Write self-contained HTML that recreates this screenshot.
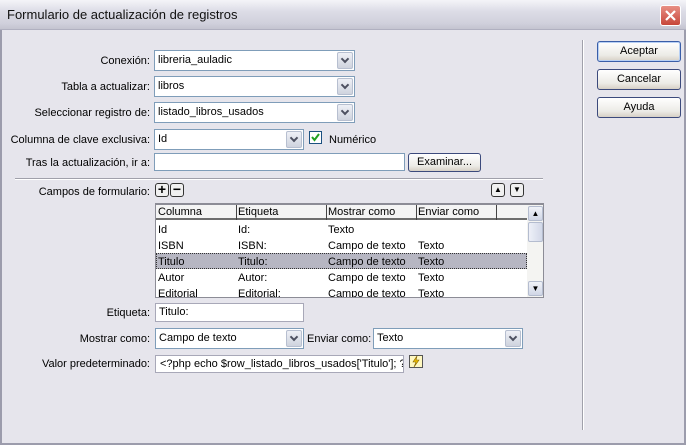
<!DOCTYPE html>
<html><head><meta charset="utf-8"><style>
*{box-sizing:border-box;margin:0;padding:0}
body{width:686px;height:445px;overflow:hidden;font-family:"Liberation Sans",sans-serif;font-size:11px;color:#000;background:#e6e5ec;position:relative}
.a{position:absolute}
.win{left:0;top:0;width:686px;height:445px;border:2px solid #9c9cac;border-top:none}
.title{left:0;top:0;width:686px;height:30px;background:linear-gradient(#f4f4f8,#dcdce6 40%,#d0d0dc 80%,#c4c4d0);border-bottom:1px solid #b0b0c0}
.title span{position:absolute;left:7px;top:7px;font-size:13px;color:#111}
.close{left:660px;top:5px;width:21px;height:21px;border:1px solid #fff;border-radius:3px;background:linear-gradient(#e88f84,#c7463a);}
.lbl{text-align:right;white-space:nowrap}
.in{background:#fff;border:1px solid #7f9db9;padding:0 3px;line-height:16px;white-space:nowrap;overflow:hidden}
.sel{background:#fff;border:1px solid #7f9db9;padding:0 3px;line-height:19px;white-space:nowrap}
.dd{position:absolute;right:1px;top:1px;bottom:1px;width:16px;background:linear-gradient(#eef0f6,#cfd3de);border:1px solid #b7bfd0;border-radius:2px}
.dd:after{content:"";position:absolute;left:4px;top:3px;width:4px;height:4px;border-right:2px solid #4d5060;border-bottom:2px solid #4d5060;transform:rotate(45deg)}
.btn{border:1px solid #3c4a7c;border-radius:3px;background:linear-gradient(#fff,#ecebe6 70%,#d6d0c5);text-align:center;line-height:18px}
.sm{width:14px;height:14px;border:1px solid #333;border-radius:3px;background:#f0f0f0;font-weight:bold;text-align:center;line-height:11px;font-size:14px}
</style></head><body>
<div class="a win"></div>
<div class="a title"><span>Formulario de actualización de registros</span></div>
<div class="a close"><svg width="19" height="19"><path d="M5 5L14 14M14 5L5 14" stroke="#fff" stroke-width="2.2"/></svg></div>
<div class="a" style="left:582px;top:40px;width:2px;height:390px;background:#a0a0aa;border-right:1px solid #fff"></div>
<div class="a btn" style="left:597px;top:41px;width:84px;height:21px;border-color:#3a5ea8;box-shadow:inset 0 0 0 1px #b8d0f4">Aceptar</div>
<div class="a btn" style="left:597px;top:69px;width:84px;height:21px">Cancelar</div>
<div class="a btn" style="left:597px;top:97px;width:84px;height:21px">Ayuda</div>

<div class="a lbl" style="right:536px;top:55px">Conexión:</div>
<div class="a sel" style="left:154px;top:50px;width:201px;height:21px">libreria_auladic<div class="dd"></div></div>
<div class="a lbl" style="right:536px;top:81px">Tabla a actualizar:</div>
<div class="a sel" style="left:154px;top:76px;width:201px;height:21px">libros<div class="dd"></div></div>
<div class="a lbl" style="right:536px;top:107px">Seleccionar registro de:</div>
<div class="a sel" style="left:154px;top:102px;width:201px;height:21px">listado_libros_usados<div class="dd"></div></div>
<div class="a lbl" style="right:536px;top:134px">Columna de clave exclusiva:</div>
<div class="a sel" style="left:154px;top:129px;width:150px;height:21px">Id<div class="dd"></div></div>
<div class="a" style="left:309px;top:131px;width:13px;height:13px;border:1px solid #1c5180;background:#fff"><svg width="11" height="11"><path d="M2 5L4.5 8L9 2" stroke="#21a121" stroke-width="2" fill="none"/></svg></div>
<div class="a" style="left:329px;top:134px">Numérico</div>
<div class="a lbl" style="right:536px;top:157px">Tras la actualización, ir a:</div>
<div class="a in" style="left:154px;top:153px;width:251px;height:18px"></div>
<div class="a btn" style="left:408px;top:153px;width:73px;height:19px;line-height:17px">Examinar...</div>
<div class="a" style="left:15px;top:178px;width:528px;background:#a0a0aa;border-bottom:1px solid #fff;height:2px"></div>

<div class="a lbl" style="right:536px;top:186px">Campos de formulario:</div>
<div class="a sm" style="left:155px;top:183px">+</div>
<div class="a sm" style="left:170px;top:183px">−</div>
<div class="a sm" style="left:491px;top:183px;font-size:8px;line-height:12px">▲</div>
<div class="a sm" style="left:510px;top:183px;font-size:8px;line-height:12px">▼</div>

<div class="a" style="left:155px;top:203px;width:389px;height:95px;background:#fff;border:1px solid #8c8c96;border-top:2px solid #8c8c96;overflow:hidden">
 <div class="a" style="left:0;top:0;width:371px;height:15px;background:#f4f4f4;border-bottom:2px solid #6e6e6e"></div>
 <div class="a" style="left:2px;top:1px">Columna</div>
 <div class="a" style="left:80px;top:0;width:1px;height:15px;background:#444"></div>
 <div class="a" style="left:82px;top:1px">Etiqueta</div>
 <div class="a" style="left:170px;top:0;width:1px;height:15px;background:#444"></div>
 <div class="a" style="left:172px;top:1px">Mostrar como</div>
 <div class="a" style="left:260px;top:0;width:1px;height:15px;background:#444"></div>
 <div class="a" style="left:262px;top:1px">Enviar como</div>
 <div class="a" style="left:340px;top:0;width:1px;height:15px;background:#444"></div>
 <div class="a" style="left:0;top:48px;width:371px;height:16px;background:#b6b6c2;border:1px dotted #333"></div>
 <div class="a" style="left:2px;top:19px">Id</div><div class="a" style="left:82px;top:19px">Id:</div><div class="a" style="left:172px;top:19px">Texto</div>
 <div class="a" style="left:2px;top:35px">ISBN</div><div class="a" style="left:82px;top:35px">ISBN:</div><div class="a" style="left:172px;top:35px">Campo de texto</div><div class="a" style="left:262px;top:35px">Texto</div>
 <div class="a" style="left:2px;top:51px">Titulo</div><div class="a" style="left:82px;top:51px">Titulo:</div><div class="a" style="left:172px;top:51px">Campo de texto</div><div class="a" style="left:262px;top:51px">Texto</div>
 <div class="a" style="left:2px;top:67px">Autor</div><div class="a" style="left:82px;top:67px">Autor:</div><div class="a" style="left:172px;top:67px">Campo de texto</div><div class="a" style="left:262px;top:67px">Texto</div>
 <div class="a" style="left:2px;top:83px">Editorial</div><div class="a" style="left:82px;top:83px">Editorial:</div><div class="a" style="left:172px;top:83px">Campo de texto</div><div class="a" style="left:262px;top:83px">Texto</div>
 <div class="a" style="left:371px;top:0;width:16px;height:93px;background:#f4f4f2"></div>
 <div class="a" style="left:372px;top:1px;width:15px;height:15px;background:linear-gradient(#f0f2f8,#d0d6e6);border:1px solid #b4bccf;border-radius:2px;font-size:8px;text-align:center;line-height:13px">▲</div>
 <div class="a" style="left:372px;top:17px;width:15px;height:20px;background:linear-gradient(90deg,#eef0f8,#d2d8e8);border:1px solid #b4bccf;border-radius:2px"></div>
 <div class="a" style="left:372px;top:76px;width:15px;height:15px;background:linear-gradient(#f0f2f8,#d0d6e6);border:1px solid #b4bccf;border-radius:2px;font-size:8px;text-align:center;line-height:13px">▼</div>
</div>

<div class="a lbl" style="right:536px;top:307px">Etiqueta:</div>
<div class="a in" style="left:155px;top:303px;width:149px;height:19px;border-color:#a8a8b8;line-height:17px">Titulo:</div>
<div class="a lbl" style="right:536px;top:333px">Mostrar como:</div>
<div class="a sel" style="left:155px;top:328px;width:149px;height:21px">Campo de texto<div class="dd"></div></div>
<div class="a" style="left:307px;top:333px">Enviar como:</div>
<div class="a sel" style="left:373px;top:328px;width:150px;height:21px">Texto<div class="dd"></div></div>
<div class="a lbl" style="right:536px;top:358px">Valor predeterminado:</div>
<div class="a in" style="left:155px;top:355px;width:249px;height:18px;border-color:#a8a8b8;padding-left:4px">&lt;?php echo $row_listado_libros_usados['Titulo']; ?</div>
<div class="a" style="left:409px;top:355px;width:14px;height:13px;border:1px solid #555;background:#fff8c0"><svg width="12" height="11"><path d="M7 0L3 6H6L4 11L9 4H6Z" fill="#f0c000" stroke="#806000" stroke-width=".6"/></svg></div>
</body></html>
